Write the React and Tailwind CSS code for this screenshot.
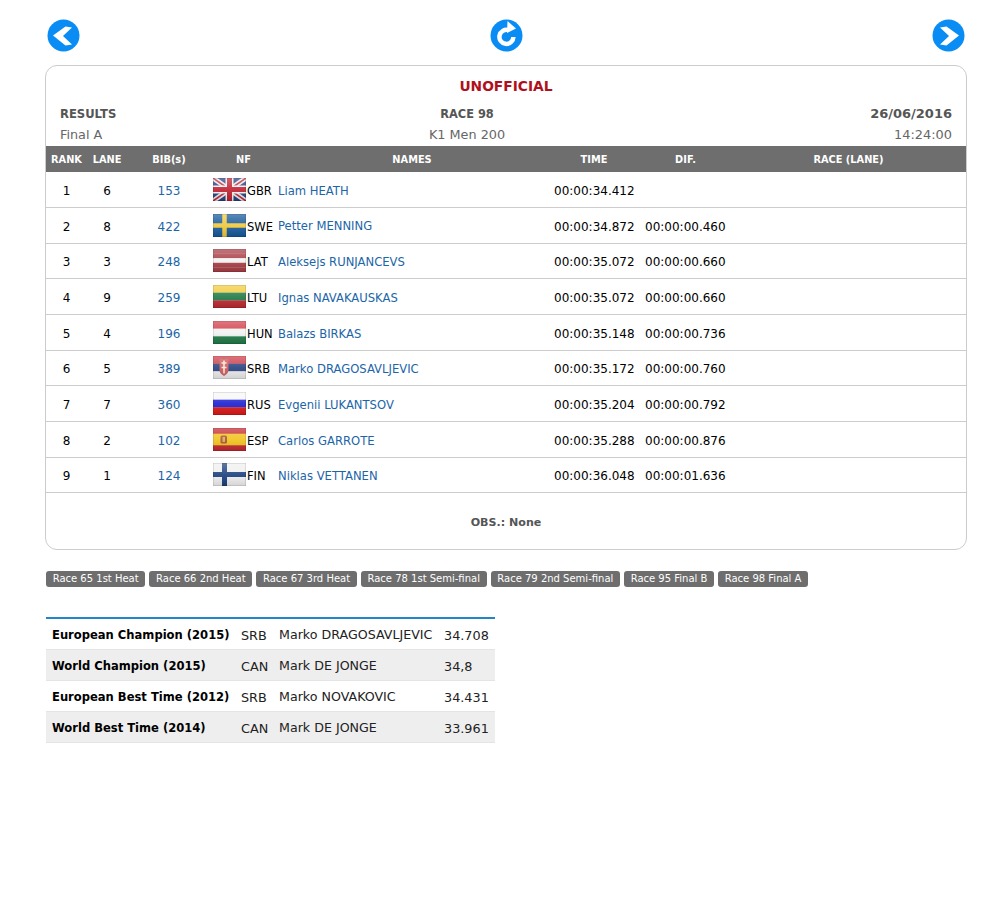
import React from "react";

const results = [
  { rank: 1, lane: 6, bib: 153, nf: "GBR", name: "Liam HEATH", time: "00:00:34.412", dif: "" },
  { rank: 2, lane: 8, bib: 422, nf: "SWE", name: "Petter MENNING", time: "00:00:34.872", dif: "00:00:00.460" },
  { rank: 3, lane: 3, bib: 248, nf: "LAT", name: "Aleksejs RUNJANCEVS", time: "00:00:35.072", dif: "00:00:00.660" },
  { rank: 4, lane: 9, bib: 259, nf: "LTU", name: "Ignas NAVAKAUSKAS", time: "00:00:35.072", dif: "00:00:00.660" },
  { rank: 5, lane: 4, bib: 196, nf: "HUN", name: "Balazs BIRKAS", time: "00:00:35.148", dif: "00:00:00.736" },
  { rank: 6, lane: 5, bib: 389, nf: "SRB", name: "Marko DRAGOSAVLJEVIC", time: "00:00:35.172", dif: "00:00:00.760" },
  { rank: 7, lane: 7, bib: 360, nf: "RUS", name: "Evgenii LUKANTSOV", time: "00:00:35.204", dif: "00:00:00.792" },
  { rank: 8, lane: 2, bib: 102, nf: "ESP", name: "Carlos GARROTE", time: "00:00:35.288", dif: "00:00:00.876" },
  { rank: 9, lane: 1, bib: 124, nf: "FIN", name: "Niklas VETTANEN", time: "00:00:36.048", dif: "00:00:01.636" },
];

const races = [
  "Race 65 1st Heat",
  "Race 66 2nd Heat",
  "Race 67 3rd Heat",
  "Race 78 1st Semi-final",
  "Race 79 2nd Semi-final",
  "Race 95 Final B",
  "Race 98 Final A",
];

const records = [
  { title: "European Champion (2015)", nf: "SRB", name: "Marko DRAGOSAVLJEVIC", time: "34.708" },
  { title: "World Champion (2015)", nf: "CAN", name: "Mark DE JONGE", time: "34,8" },
  { title: "European Best Time (2012)", nf: "SRB", name: "Marko NOVAKOVIC", time: "34.431" },
  { title: "World Best Time (2014)", nf: "CAN", name: "Mark DE JONGE", time: "33.961" },
];

const rowCols = "grid grid-cols-[41px_40px_84px_65px_272px_92px_91px_235px]";

function Stripes({ colors }) {
  const h = 23 / colors.length;
  return colors.map((c, i) => <rect key={i} x="0" y={i * h} width="33" height={h + 0.2} fill={c} />);
}

function FlagArt({ nf }) {
  switch (nf) {
    case "GBR":
      return (
        <>
          <rect width="33" height="23" fill="#27407f" />
          <path d="M0 0L33 23M33 0L0 23" stroke="#e8e8ee" strokeWidth="5" />
          <path d="M0 0L33 23M33 0L0 23" stroke="#c02636" strokeWidth="1.6" />
          <path d="M16.5 0V23M0 11.5H33" stroke="#f2f2f2" strokeWidth="8" />
          <path d="M16.5 0V23M0 11.5H33" stroke="#c01f2e" strokeWidth="5" />
        </>
      );
    case "SWE":
      return (
        <>
          <rect width="33" height="23" fill="#15589a" />
          <path d="M11.5 0V23M0 11.5H33" stroke="#efc83a" strokeWidth="4.5" />
        </>
      );
    case "LAT":
      return <Stripes colors={["#a83c44", "#a83c44", "#f2f2f2", "#a83c44", "#a83c44"]} />;
    case "LTU":
      return <Stripes colors={["#f2cc3c", "#1f7a48", "#bb2a30"]} />;
    case "HUN":
      return <Stripes colors={["#d23c48", "#f2f2f2", "#1f7a48"]} />;
    case "SRB":
      return (
        <>
          <Stripes colors={["#cf3a46", "#27407f", "#ececec"]} />
          <path d="M6.5 3H15.5V14C15.5 17 13.5 18.5 11 20C8.5 18.5 6.5 17 6.5 14Z" fill="#c9595a" />
          <path d="M8.5 7H13.5M11 4.5V17.5M8.5 11.5H13.5" stroke="#f3e6d8" strokeWidth="1.6" />
        </>
      );
    case "RUS":
      return <Stripes colors={["#f7f7f7", "#1a1fd0", "#dd1616"]} />;
    case "ESP":
      return (
        <>
          <rect width="33" height="23" fill="#c4262e" />
          <rect y="5.7" width="33" height="11.6" fill="#f1c21c" />
          <rect x="7.5" y="7.5" width="6.5" height="8" rx="1.5" fill="#a8522a" />
          <rect x="9.5" y="9" width="2.5" height="5" fill="#d9a860" />
        </>
      );
    case "FIN":
      return (
        <>
          <rect width="33" height="23" fill="#f0f0f0" />
          <path d="M11.5 0V23M0 11.5H33" stroke="#1a3f7c" strokeWidth="5" />
        </>
      );
    default:
      return null;
  }
}

function Flag({ nf }) {
  const id = "gloss-" + nf;
  return (
    <svg width="33" height="23" viewBox="0 0 33 23" className="block shrink-0">
      <defs>
        <linearGradient id={id} x1="0" y1="0" x2="0" y2="1">
          <stop offset="0" stopColor="#fff" stopOpacity="0.3" />
          <stop offset="0.5" stopColor="#fff" stopOpacity="0.1" />
          <stop offset="1" stopColor="#000" stopOpacity="0.12" />
        </linearGradient>
      </defs>
      <FlagArt nf={nf} />
      <rect width="33" height="23" fill={`url(#${id})`} />
      <rect x="0.25" y="0.25" width="32.5" height="22.5" fill="none" stroke="#000" strokeOpacity="0.2" strokeWidth="0.5" />
    </svg>
  );
}

function NavIcon({ type }) {
  return (
    <svg width="33" height="33" viewBox="0 0 33 33" className="block">
      <circle cx="16.5" cy="16.5" r="16" fill="#0a8cf5" />
      {type === "prev" && <path d="M6 16.5L18.5 7.5L25 8.5L16 17L25 25.5L18.5 26.5Z" fill="#fff" />}
      {type === "next" && <path d="M27 16.5L14.5 7.5L8 8.5L17 17L8 25.5L14.5 26.5Z" fill="#fff" />}
      {type === "reload" && (
        <>
          <path d="M18.5 11.2A7 7 0 1 0 23.4 18" fill="none" stroke="#fff" strokeWidth="4.5" />
          <path d="M17.5 2L26 9.5L17 14Z" fill="#fff" />
        </>
      )}
    </svg>
  );
}

export default function App() {
  return (
    <div className="min-h-[900px] bg-white font-['DejaVu_Sans',Verdana,sans-serif] text-[12px] text-black pt-[19px] pl-[45px] pr-[29px]">
      <div className="flex justify-between pl-[2px] pr-[2px] h-[33px]">
        <a href="#prev"><NavIcon type="prev" /></a>
        <a href="#reload"><NavIcon type="reload" /></a>
        <a href="#next"><NavIcon type="next" /></a>
      </div>

      <div className="mt-[13px] w-[922px] h-[485px] border border-[#cccccc] rounded-[12px]">
        <div className="pt-[11px] text-center text-[13.8px] leading-[18px] font-bold text-[#b0101c]">UNOFFICIAL</div>

        <div className="mt-[10px] grid grid-cols-[340px_134px_1fr] px-[14px] text-[#555555]">
          <div className="pt-[1px] font-bold text-[11.6px] leading-[16px]">RESULTS</div>
          <div className="pt-[1px] font-bold text-[11.4px] leading-[16px] text-center">RACE 98</div>
          <div className="pt-[1px] font-bold text-[13px] leading-[16px] text-right">26/06/2016</div>
          <div className="mt-[5px] text-[12.8px] text-[#666666] leading-[16px]">Final A</div>
          <div className="mt-[5px] text-[12.8px] text-[#666666] leading-[16px] text-center">K1 Men 200</div>
          <div className="mt-[5px] text-[12.9px] text-[#666666] leading-[16px] text-right">14:24:00</div>
        </div>

        <div className={`${rowCols} mt-[3px] h-[26.15px] pt-[2px] items-center bg-[#6e6e6e] text-white text-[9.8px] font-bold text-center`}>
          <div>RANK</div>
          <div>LANE</div>
          <div>BIB(s)</div>
          <div>NF</div>
          <div>NAMES</div>
          <div>TIME</div>
          <div>DIF.</div>
          <div>RACE (LANE)</div>
        </div>

        {results.map((r) => (
          <div key={r.rank} className={`${rowCols} h-[35.7px] items-center border-b border-[#cccccc]`}>
            <div className="pt-[3px] text-center">{r.rank}</div>
            <div className="pt-[3px] text-center">{r.lane}</div>
            <div className="pt-[3px] text-center text-[#1c65a8]">{r.bib}</div>
            <div className="flex items-center pl-[2px]">
              <Flag nf={r.nf} />
              <span className="ml-[1px] pt-[4px] text-[11.5px]">{r.nf}</span>
            </div>
            <div className="pl-[2px] pt-[4px] text-[11.6px] text-[#1c65a8]">{r.name}</div>
            <div className="pl-[6px] pt-[3px] whitespace-nowrap">{r.time}</div>
            <div className="pl-[5px] pt-[3px] whitespace-nowrap">{r.dif}</div>
            <div></div>
          </div>
        ))}

        <div className="pt-[22px] text-center font-bold text-[11.1px] leading-[16px] text-[#555555]">OBS.: None</div>
      </div>

      <div className="mt-[21px] flex gap-[4px] pl-[1px]">
        {races.map((race) => (
          <a key={race} href="#race" className="h-[16px] px-[6.7px] rounded-[3px] bg-[#6e6e6e] text-white text-[10px] leading-[16px] whitespace-nowrap">
            {race}
          </a>
        ))}
      </div>

      <div className="mt-[30px] ml-[1px] w-[449px] border-t-2 border-[#1f86c9]">
        {records.map((rec, i) => (
          <div
            key={rec.title}
            className={`grid grid-cols-[189px_38px_165px_57px] h-[31px] items-center border-b border-[#e4e4e4] text-[#222222] ${i % 2 === 1 ? "bg-[#eeeeee]" : "bg-white"}`}
          >
            <div className="pl-[6px] pt-[4px] font-bold text-[11.55px] text-black whitespace-nowrap">{rec.title}</div>
            <div className="pl-[6px] pt-[3px] text-[12.8px]">{rec.nf}</div>
            <div className="pl-[6px] pt-[3px] text-[12.65px] whitespace-nowrap">{rec.name}</div>
            <div className="pl-[6px] pt-[3px] text-[12.8px]">{rec.time}</div>
          </div>
        ))}
      </div>
    </div>
  );
}
